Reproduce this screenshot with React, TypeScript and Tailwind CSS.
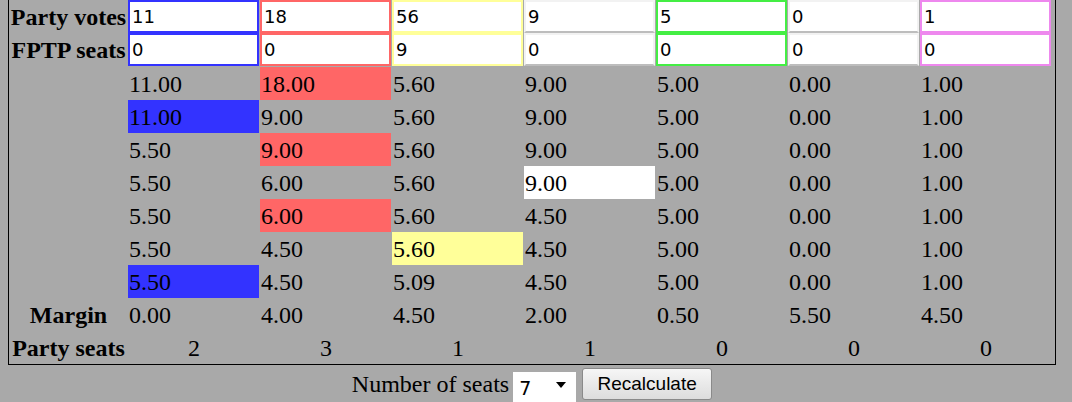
import React, { useState } from "react";

type Party = {
  votes: string;
  fptp: string;
  input: string; // border classes for the two inputs
  hl: string; // highlight background
};

const parties: Party[] = [
  { votes: "11", fptp: "0", input: "border-[#3333ff]", hl: "bg-[#3333ff]" },
  { votes: "18", fptp: "0", input: "border-[#ff6666]", hl: "bg-[#ff6666]" },
  { votes: "56", fptp: "9", input: "border-[#ffff99]", hl: "bg-[#ffff99]" },
  { votes: "9", fptp: "0", input: "border-[#f2f2f2] border-b-[#bdbdbd]", hl: "bg-white" },
  { votes: "5", fptp: "0", input: "border-[#44ee44]", hl: "bg-[#44ee44]" },
  { votes: "0", fptp: "0", input: "border-[#f2f2f2] border-b-[#bdbdbd]", hl: "bg-[#cccccc]" },
  { votes: "1", fptp: "0", input: "border-[#ee88ee]", hl: "bg-[#ee88ee]" },
];

// quotient table, [value, highlighted]
const quotients: [string, boolean][][] = [
  [["11.00", false], ["18.00", true], ["5.60", false], ["9.00", false], ["5.00", false], ["0.00", false], ["1.00", false]],
  [["11.00", true], ["9.00", false], ["5.60", false], ["9.00", false], ["5.00", false], ["0.00", false], ["1.00", false]],
  [["5.50", false], ["9.00", true], ["5.60", false], ["9.00", false], ["5.00", false], ["0.00", false], ["1.00", false]],
  [["5.50", false], ["6.00", false], ["5.60", false], ["9.00", true], ["5.00", false], ["0.00", false], ["1.00", false]],
  [["5.50", false], ["6.00", true], ["5.60", false], ["4.50", false], ["5.00", false], ["0.00", false], ["1.00", false]],
  [["5.50", false], ["4.50", false], ["5.60", true], ["4.50", false], ["5.00", false], ["0.00", false], ["1.00", false]],
  [["5.50", true], ["4.50", false], ["5.09", false], ["4.50", false], ["5.00", false], ["0.00", false], ["1.00", false]],
];

const margins = ["0.00", "4.00", "4.50", "2.00", "0.50", "5.50", "4.50"];
const seats = ["2", "3", "1", "1", "0", "0", "0"];

const serif = "font-['Liberation_Serif','Times_New_Roman',serif]";
const sans = "font-['Liberation_Sans',Arial,sans-serif]";
const inputFont = "font-['DejaVu_Sans',Verdana,sans-serif]";

export default function App() {
  const [numSeats, setNumSeats] = useState("7");

  return (
    <div className={`min-h-[402px] w-full bg-[#a9a9a9] text-black ${serif}`}>
      <div className="ml-2 w-[1048px] border-x border-b border-black">
        <div className="grid grid-cols-[119px_repeat(7,132px)] text-[24px] leading-none">
          {/* Party votes inputs */}
          <div className="flex h-[33px] items-center justify-center font-bold">Party votes</div>
          {parties.map((p, i) => (
            <div key={`v${i}`} className="h-[33px]">
              <input
                defaultValue={p.votes}
                className={`h-[33px] w-[131px] border-2 bg-white px-[2px] text-[18px] outline-none ${inputFont} ${p.input}`}
              />
            </div>
          ))}

          {/* FPTP inputs */}
          <div className="flex h-[34px] items-center justify-center font-bold">FPTP seats</div>
          {parties.map((p, i) => (
            <div key={`f${i}`} className="h-[34px]">
              <input
                defaultValue={p.fptp}
                className={`h-[33px] w-[131px] border-2 bg-white px-[2px] text-[18px] outline-none ${inputFont} ${p.input}`}
              />
            </div>
          ))}

          {/* Quotients */}
          {quotients.map((row, r) => (
            <React.Fragment key={`q${r}`}>
              <div className="h-[33px]" />
              {row.map(([val, hl], c) => (
                <div
                  key={c}
                  className={`flex h-[33px] w-[131px] items-center pl-px ${hl ? parties[c].hl : ""}`}
                >
                  {val}
                </div>
              ))}
            </React.Fragment>
          ))}

          {/* Margin */}
          <div className="flex h-[33px] items-center justify-center font-bold">Margin</div>
          {margins.map((m, i) => (
            <div key={`m${i}`} className="flex h-[33px] items-center pl-px">
              {m}
            </div>
          ))}

          {/* Party seats */}
          <div className="flex h-[33px] items-center justify-center font-bold">Party seats</div>
          {seats.map((s, i) => (
            <div key={`s${i}`} className="flex h-[33px] items-center justify-center">
              {s}
            </div>
          ))}
        </div>
      </div>

      {/* Controls */}
      <div className="ml-2 flex w-[1048px] items-center justify-center pt-px text-[24px]">
        <span>Number of seats</span>
        <div className="relative ml-1 h-[31px] w-[63px]">
          <select
            value={numSeats}
            onChange={(e) => setNumSeats(e.target.value)}
            className={`h-[31px] w-[63px] appearance-none bg-white pl-[6px] text-[19px] outline-none ${inputFont}`}
          >
            {Array.from({ length: 20 }, (_, i) => (
              <option key={i} value={String(i + 1)}>
                {i + 1}
              </option>
            ))}
          </select>
          <svg
            className="pointer-events-none absolute right-[10px] top-[13px]"
            width="10"
            height="6"
            viewBox="0 0 10 6"
          >
            <path d="M0 0h10L5 6z" fill="#000" />
          </svg>
        </div>
        <button
          className={`ml-[6px] h-[32px] w-[130px] rounded-[3px] border border-[#8a8a8a] bg-gradient-to-b from-[#f6f6f6] to-[#dddddd] text-[19px] ${sans}`}
        >
          Recalculate
        </button>
      </div>
    </div>
  );
}
